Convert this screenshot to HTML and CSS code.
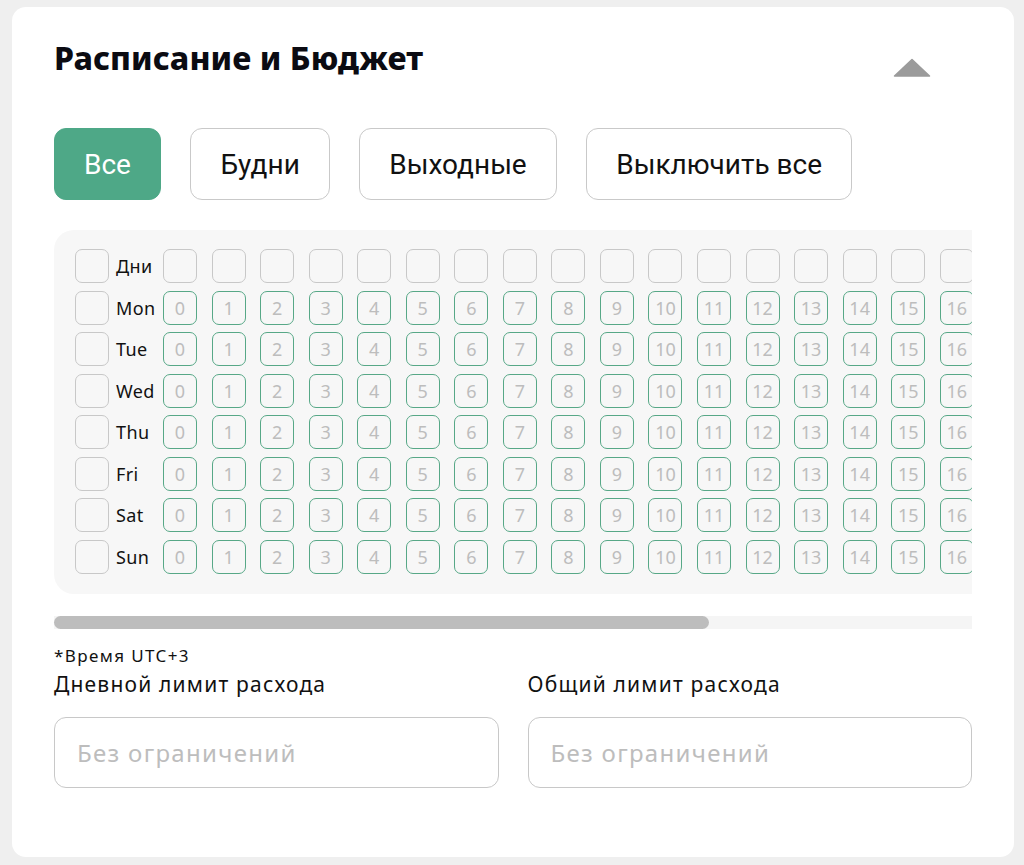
FILE: index.html
```html
<!DOCTYPE html>
<html lang="ru">
<head>
<meta charset="utf-8">
<title>Расписание и Бюджет</title>
<link rel="stylesheet" href="styles.css">
</head>
<body>
<div class="card">
  <div class="header">
    <h2 class="title">Расписание и Бюджет</h2>
    <svg class="toggle" width="38" height="19" viewBox="0 0 38 19"><path d="M19 1.5 L36.5 18 L1.5 18 Z" fill="#9b9b9b" stroke="#9b9b9b" stroke-width="1.5" stroke-linejoin="round"/></svg>
  </div>
  <div class="presets">
    <button class="preset active">Все</button>
    <button class="preset">Будни</button>
    <button class="preset">Выходные</button>
    <button class="preset">Выключить все</button>
  </div>
  <div class="scroller">
    <div class="grid" id="grid"></div>
  </div>
  <div class="scrollbar"><div class="thumb"></div></div>
  <div class="note">*Время UTC+3</div>
  <div class="limits">
    <div class="field">
      <label class="flabel">Дневной лимит расхода</label>
      <input class="finput" type="text" placeholder="Без ограничений">
    </div>
    <div class="field">
      <label class="flabel">Общий лимит расхода</label>
      <input class="finput" type="text" placeholder="Без ограничений">
    </div>
  </div>
</div>
<script>
(function(){
  var grid = document.getElementById('grid');
  var rows = ['Дни','Mon','Tue','Wed','Thu','Fri','Sat','Sun'];
  rows.forEach(function(r, ri){
    var row = document.createElement('div');
    row.className = 'row';
    var cb = document.createElement('div');
    cb.className = 'box check';
    row.appendChild(cb);
    var lb = document.createElement('div');
    lb.className = 'day';
    lb.textContent = r;
    row.appendChild(lb);
    for (var h = 0; h < 24; h++) {
      var c = document.createElement('div');
      if (ri === 0) { c.className = 'box'; }
      else { c.className = 'box hour'; c.textContent = h; }
      row.appendChild(c);
    }
    grid.appendChild(row);
  });
})();
</script>
</body>
</html>
```

FILE: styles.css
```css
html, body {
  margin: 0;
  padding: 0;
}
body {
  background: #efefef;
  font-family: "Noto Sans", "Open Sans", sans-serif;
  color: #111;
}
.card {
  box-sizing: border-box;
  margin: 7px 10px 8px 12px;
  width: 1002px;
  height: 850px;
  background: #fff;
  border-radius: 14px;
  padding: 31px 42px 0 42px;
}
.header {
  display: flex;
  align-items: flex-start;
  justify-content: space-between;
}
.title {
  margin: 0;
  font-family: "Noto Sans", sans-serif;
  font-weight: 800;
  font-size: 32px;
  line-height: 40px;
  letter-spacing: 0.1px;
  color: #0b0b12;
}
.toggle {
  margin-right: 41px;
  margin-top: 20px;
}
.presets {
  display: flex;
  gap: 29.5px;
  margin-top: 50px;
}
.preset {
  box-sizing: border-box;
  height: 72px;
  padding: 0 29px;
  border: 1.5px solid #c9c9c9;
  border-radius: 12px;
  background: #fff;
  font-family: Roboto, "Liberation Sans", sans-serif;
  font-size: 28px;
  color: #111;
}
.preset.active {
  background: #4ea887;
  border-color: #4ea887;
  color: #fff;
}
.scroller {
  margin-top: 30px;
  width: 918px;
  overflow: hidden;
}
.grid {
  display: inline-flex;
  flex-direction: column;
  gap: 7.5px;
  background: #f7f7f7;
  border-radius: 20px;
  padding: 19px 21px 20px 21px;
}
.row {
  display: flex;
  align-items: center;
  gap: 14.56px;
}
.box {
  box-sizing: border-box;
  flex: none;
  width: 34px;
  height: 34px;
  border: 1.5px solid #c8c8c8;
  border-radius: 7px;
  display: flex;
  align-items: center;
  justify-content: center;
  font-size: 18px;
  color: #bdbdbd;
}
.box.hour {
  border: 1.8px solid #57a887;
}
.box.check {
  margin-right: -14.56px;
}
.day {
  flex: none;
  width: 54px;
  box-sizing: border-box;
  padding-left: 7px;
  font-size: 18px;
  letter-spacing: 0.4px;
  color: #111;
  margin-right: -14.56px;
}
.scrollbar {
  margin-top: 22px;
  width: 918px;
  height: 13px;
  background: #f5f5f5;
}
.thumb {
  width: 655px;
  height: 13px;
  border-radius: 7px;
  background: #bdbdbd;
}
.note {
  margin-top: 16px;
  font-size: 17px;
  line-height: 22px;
  letter-spacing: 1.4px;
  color: #111;
}
.limits {
  display: flex;
  gap: 29px;
  margin-top: 4px;
}
.field {
  flex: 1;
  display: flex;
  flex-direction: column;
}
.flabel {
  font-size: 21px;
  line-height: 26px;
  letter-spacing: 1.2px;
  color: #111;
}
.finput {
  box-sizing: border-box;
  margin-top: 20px;
  height: 71px;
  border: 1.5px solid #c8c8c8;
  border-radius: 12px;
  padding: 0 22px;
  font-family: "Noto Sans", sans-serif;
  font-size: 24px;
  letter-spacing: 1.3px;
  color: #111;
  background: #fff;
  outline: none;
}
.finput::placeholder {
  color: #bdbdbd;
}
```
